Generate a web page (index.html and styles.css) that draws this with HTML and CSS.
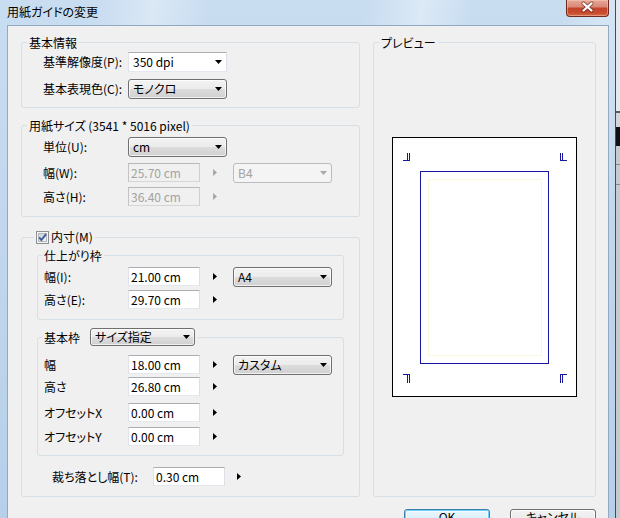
FILE: index.html
```html
<!DOCTYPE html>
<html lang="ja">
<head>
<meta charset="utf-8">
<title>用紙ガイドの変更</title>
<link rel="stylesheet" href="styles.css">
</head>
<body>
<div class="screen">
  <div class="window">
    <div class="titlebar">
      <span class="title">用紙ガイドの変更</span>
      <span class="close" role="button" aria-label="閉じる">
        <svg width="43" height="17" viewBox="0 0 43 17">
          <path d="M17.5 4.5 L25.5 11.5 M25.5 4.5 L17.5 11.5" stroke="#5a1a10" stroke-width="4.2" stroke-linecap="round" fill="none" opacity=".55"/>
          <path d="M17.5 4.5 L25.5 11.5 M25.5 4.5 L17.5 11.5" stroke="#ffffff" stroke-width="2.3" stroke-linecap="round" fill="none"/>
        </svg>
      </span>
    </div>
    <div class="frame">
      <div class="client">
        <div class="columns">
          <div class="left">
            <fieldset class="group">
              <legend>基本情報</legend>
              <div class="gbody g1">
                <div class="row">
                  <span class="lbl">基準解像度(P):</span>
                  <span class="combo edit"><span class="val">350 dpi</span><span class="dd"></span></span>
                </div>
                <div class="row mt7">
                  <span class="lbl">基本表現色(C):</span>
                  <span class="combo btn"><span class="val">モノクロ</span><span class="dd"></span></span>
                </div>
              </div>
            </fieldset>

            <fieldset class="group mt11">
              <legend>用紙サイズ (3541 * 5016 pixel)</legend>
              <div class="gbody g2">
                <div class="row">
                  <span class="lbl">単位(U):</span>
                  <span class="combo btn"><span class="val">cm</span><span class="dd"></span></span>
                </div>
                <div class="row mt6">
                  <span class="lbl">幅(W):</span>
                  <input class="field" type="text" value="25.70 cm" disabled>
                  <span class="tri off"></span>
                  <span class="combo off"><span class="val">B4</span><span class="dd"></span></span>
                </div>
                <div class="row short mt4">
                  <span class="lbl">高さ(H):</span>
                  <input class="field" type="text" value="36.40 cm" disabled>
                  <span class="tri off"></span>
                </div>
              </div>
            </fieldset>

            <fieldset class="group mt13">
              <legend class="lg-check">
                <span class="chk">
                  <svg width="13" height="13" viewBox="0 0 13 13">
                    <defs>
                      <linearGradient id="cbg" x1="0" y1="0" x2="1" y2="1">
                        <stop offset="0" stop-color="#cbcfd5"/>
                        <stop offset="1" stop-color="#f6f6f6"/>
                      </linearGradient>
                    </defs>
                    <rect x="0.5" y="0.5" width="12" height="12" fill="#f4f4f4" stroke="#8e8f8f"/>
                    <rect x="2.5" y="2.5" width="8" height="8" fill="url(#cbg)" stroke="#b5b9bf"/>
                    <path d="M3.2 6.3 L5.4 9 L10 3.2" stroke="#3c5a98" stroke-width="1.9" fill="none"/>
                  </svg>
                  内寸(M)
                </span>
              </legend>
              <div class="gbody g3">
                <fieldset class="group">
                  <legend class="lg-inner">仕上がり枠</legend>
                  <div class="gbody gi1">
                    <div class="row">
                      <span class="lbl in">幅(I):</span>
                      <input class="field" type="text" value="21.00 cm">
                      <span class="tri"></span>
                      <span class="combo btn"><span class="val">A4</span><span class="dd"></span></span>
                    </div>
                    <div class="row short mt3">
                      <span class="lbl in">高さ(E):</span>
                      <input class="field" type="text" value="29.70 cm">
                      <span class="tri"></span>
                    </div>
                  </div>
                </fieldset>

                <fieldset class="group mt8">
                  <legend class="lg-inner">
                    <span class="lg-combo">基本枠<span class="combo btn sm"><span class="val">サイズ指定</span><span class="dd"></span></span></span>
                  </legend>
                  <div class="gbody gi2">
                    <div class="row">
                      <span class="lbl in">幅</span>
                      <input class="field" type="text" value="18.00 cm">
                      <span class="tri"></span>
                      <span class="combo btn"><span class="val">カスタム</span><span class="dd"></span></span>
                    </div>
                    <div class="row short mt2">
                      <span class="lbl in">高さ</span>
                      <input class="field" type="text" value="26.80 cm">
                      <span class="tri"></span>
                    </div>
                    <div class="row short mt7">
                      <span class="lbl in">オフセットX</span>
                      <input class="field" type="text" value="0.00 cm">
                      <span class="tri"></span>
                    </div>
                    <div class="row short mt5">
                      <span class="lbl in">オフセットY</span>
                      <input class="field" type="text" value="0.00 cm">
                      <span class="tri"></span>
                    </div>
                  </div>
                </fieldset>

                <div class="row short bleed">
                  <span class="lbl wide">裁ち落とし幅(T):</span>
                  <input class="field" type="text" value="0.30 cm">
                  <span class="tri near"></span>
                </div>
              </div>
            </fieldset>
          </div>

          <fieldset class="group preview">
            <legend>プレビュー</legend>
            <div class="paper">
              <svg width="183" height="258" viewBox="0 0 183 258" shape-rendering="crispEdges">
                <rect x="35.5" y="41.5" width="113" height="176" fill="none" stroke="#faf7dc"/>
                <rect x="27.5" y="33.5" width="128" height="192" fill="none" stroke="#1616a0"/>
                <g stroke="#1616a0" fill="none">
                  <path d="M10 22.5 H17 M14.5 15 V23 M16.5 15 V23"/>
                  <path d="M167 22.5 H174 M167.5 15 V23 M169.5 15 V23"/>
                  <path d="M10 236.5 H17 M14.5 236 V245 M16.5 236 V245"/>
                  <path d="M167 236.5 H174 M167.5 236 V245 M169.5 236 V245"/>
                </g>
              </svg>
            </div>
          </fieldset>
        </div>

        <div class="actions">
          <button class="btn-ok" type="button">OK</button>
          <button class="btn-cancel" type="button">キャンセル</button>
        </div>
      </div>
    </div>
  </div>
  <div class="desktop"></div>
</div>
</body>
</html>
```

FILE: styles.css
```css
* {
  box-sizing: border-box;
}

html,
body {
  margin: 0;
  padding: 0;
}

body {
  width: 620px;
  height: 518px;
  overflow: hidden;
  font-family: "Noto Sans CJK JP", "Noto Sans", sans-serif;
  font-size: 12px;
  line-height: 14px;
  color: #000;
  font-feature-settings: "palt";
  background: #cfd6de;
}

fieldset {
  margin: 0;
  padding: 0;
  min-width: 0;
}

.screen {
  display: flex;
  width: 620px;
  height: 518px;
}

/* ---------- window frame ---------- */
.window {
  width: 616px;
  flex: none;
  display: flex;
  flex-direction: column;
  border-right: 1px solid #2f5173;
  background:
    linear-gradient(100deg,
      rgba(255, 255, 255, 0) 14%,
      rgba(255, 255, 255, 0.32) 22%,
      rgba(255, 255, 255, 0) 30%,
      rgba(255, 255, 255, 0) 52%,
      rgba(255, 255, 255, 0.35) 60%,
      rgba(255, 255, 255, 0) 67%,
      rgba(255, 255, 255, 0) 80%,
      rgba(255, 255, 255, 0.25) 86%,
      rgba(255, 255, 255, 0) 92%),
    linear-gradient(#c9ddf1, #b7cfe9);
}

.titlebar {
  height: 25px;
  flex: none;
  display: flex;
  justify-content: space-between;
  align-items: flex-start;
  padding: 0 6px 0 7px;
}

.title {
  padding-top: 4px;
  line-height: 15px;
  font-size: 12px;
  color: #000;
}

.close {
  display: block;
  width: 43px;
  height: 17px;
  border: 1px solid #6e2a1f;
  border-top: 0;
  border-radius: 0 0 4px 4px;
  background: linear-gradient(#e6a898 0%, #d98a76 42%, #c2442c 52%, #c74b2e 80%, #d86a45 100%);
  box-shadow: inset 0 0 0 1px rgba(255, 210, 190, 0.45);
  overflow: hidden;
}

.close svg {
  display: block;
  margin: -1px 0 0 -1px;
}

.frame {
  flex: 1;
  padding: 0 6px 0 7px;
}

.client {
  height: 100%;
  background: #f0f0f0;
  border: 1px solid #93a9c1;
  border-bottom: 0;
  padding: 10px 12px 0 13px;
}

/* ---------- layout ---------- */
.columns {
  display: flex;
  gap: 13px;
}

.left {
  width: 339px;
  flex: none;
  display: flex;
  flex-direction: column;
}

.preview {
  width: 223px;
  flex: none;
}

/* ---------- group boxes ---------- */
.group {
  border: 1px solid #d5dfe5;
  border-radius: 3px;
}

.group > legend {
  margin-left: 5px;
  padding: 0 2px;
  line-height: 13px;
}

.group > legend.lg-check {
  margin-left: 12px;
  line-height: 14px;
}

.group > legend.lg-inner {
  margin-left: 4px;
}

.chk {
  display: flex;
  align-items: center;
  gap: 2px;
}

.chk svg {
  display: block;
  flex: none;
}

.lg-combo {
  display: flex;
  align-items: center;
  gap: 10px;
}

.g1 {
  padding: 3px 0 8px 21px;
}

.g2 {
  padding: 5px 0 10px 21px;
}

.g3 {
  padding: 5px 15px 10px 15px;
}

.gi1 {
  padding: 5px 0 10px 6px;
}

.gi2 {
  padding: 9px 0 9px 6px;
}

.mt2 { margin-top: 2px; }
.mt3 { margin-top: 3px; }
.mt4 { margin-top: 4px; }
.mt5 { margin-top: 5px; }
.mt6 { margin-top: 6px; }
.mt7 { margin-top: 7px; }
.mt8 { margin-top: 8px; }
.mt11 { margin-top: 11px; }
.mt13 { margin-top: 13px; }

/* ---------- rows ---------- */
.row {
  display: flex;
  align-items: flex-start;
  height: 20px;
}

.row.short {
  height: 19px;
}

.row.bleed {
  margin: 11px 0 0 15px;
}

.lbl {
  flex: none;
  width: 85px;
  line-height: 19px;
  white-space: nowrap;
}

.lbl.in {
  width: 84px;
}

.lbl.wide {
  width: 101px;
}

/* ---------- text fields ---------- */
.field {
  flex: none;
  width: 72px;
  height: 19px;
  margin: 0;
  padding: 0 2px;
  font: inherit;
  font-size: 12px;
  line-height: 17px;
  color: #000;
  background: #fff;
  border: 1px solid;
  border-color: #abadb3 #dbdfe6 #e3e9ef #e2e3ea;
  border-radius: 0;
  outline: none;
}

.field:disabled {
  color: #a3a3a3;
  background: #f0f0f0;
  border-color: #b7b7b7 #cfcfcf #d6d6d6 #c4c4c4;
  -webkit-text-fill-color: #a3a3a3;
  opacity: 1;
}

/* spin arrow */
.tri {
  flex: none;
  width: 4px;
  height: 7px;
  margin: 6px 16px 0 13px;
  background: #000;
  clip-path: polygon(0 0, 100% 50%, 0 100%);
}

.tri.off {
  background: #a8a8a8;
}

.tri.near {
  margin-left: 12px;
}

/* ---------- combo boxes ---------- */
.combo {
  flex: none;
  display: flex;
  align-items: center;
  justify-content: space-between;
  width: 99px;
  height: 20px;
  padding: 0 4px 0 4px;
  line-height: 18px;
  white-space: nowrap;
  border: 1px solid #707070;
  border-radius: 3px;
}

.combo.edit {
  background: #fff;
  border-color: #abadb3 #dbdfe6 #e3e9ef #e2e3ea;
  border-radius: 0;
}

.combo.btn {
  background: linear-gradient(#f3f3f3 0%, #ebebeb 50%, #dddddd 50%, #d0d0d0 100%);
  box-shadow: inset 0 0 0 1px rgba(255, 255, 255, 0.7);
}

.combo.off {
  color: #a3a3a3;
  background: #f4f4f4;
  border-color: #b9bdc0;
}

.combo.sm {
  width: 105px;
  height: 18px;
  line-height: 16px;
}

.dd {
  flex: none;
  width: 7px;
  height: 4px;
  background: #000;
  clip-path: polygon(0 0, 100% 0, 50% 100%);
}

.combo.off .dd {
  background: #a8a8a8;
}

/* ---------- preview ---------- */
.paper {
  width: 185px;
  height: 260px;
  margin: 88px auto 0;
  background: #fff;
  border: 1px solid #000;
}

.paper svg {
  display: block;
}

/* ---------- buttons ---------- */
.actions {
  display: flex;
  justify-content: flex-end;
  gap: 20px;
  margin-top: 12px;
}

.actions button {
  width: 86px;
  height: 23px;
  margin: 0;
  padding: 0;
  font: inherit;
  font-size: 12px;
  line-height: 14px;
  color: #000;
  display: flex;
  justify-content: center;
  align-items: flex-start;
  border-radius: 3px;
}

.btn-ok {
  border: 1px solid #3c7fb1;
  background: linear-gradient(#eaf6fd 0%, #d9f0fc 50%, #bee6fd 50%, #a7d9f5 100%);
  box-shadow: inset 0 0 0 1px #6fd0f5, inset 0 0 0 2px rgba(255, 255, 255, 0.6);
}

.btn-cancel {
  border: 1px solid #707070;
  background: linear-gradient(#f2f2f2 0%, #ebebeb 50%, #dddddd 50%, #cfcfcf 100%);
  box-shadow: inset 0 0 0 1px #fcfcfc;
}

/* ---------- desktop strip ---------- */
.desktop {
  flex: 1;
  background: linear-gradient(#e3e9ef 0, #e3e9ef 111px, #5a5a5a 111px, #5a5a5a 113px,
    #d2d6da 113px, #d2d6da 127px, #111 127px, #111 146px,
    #c6cacd 146px, #c6cacd 164px, #8a8a8a 164px, #8a8a8a 165px,
    #c6cacd 165px, #c6cacd 184px, #8a8a8a 184px, #8a8a8a 185px,
    #c6cacd 185px);
}
```
